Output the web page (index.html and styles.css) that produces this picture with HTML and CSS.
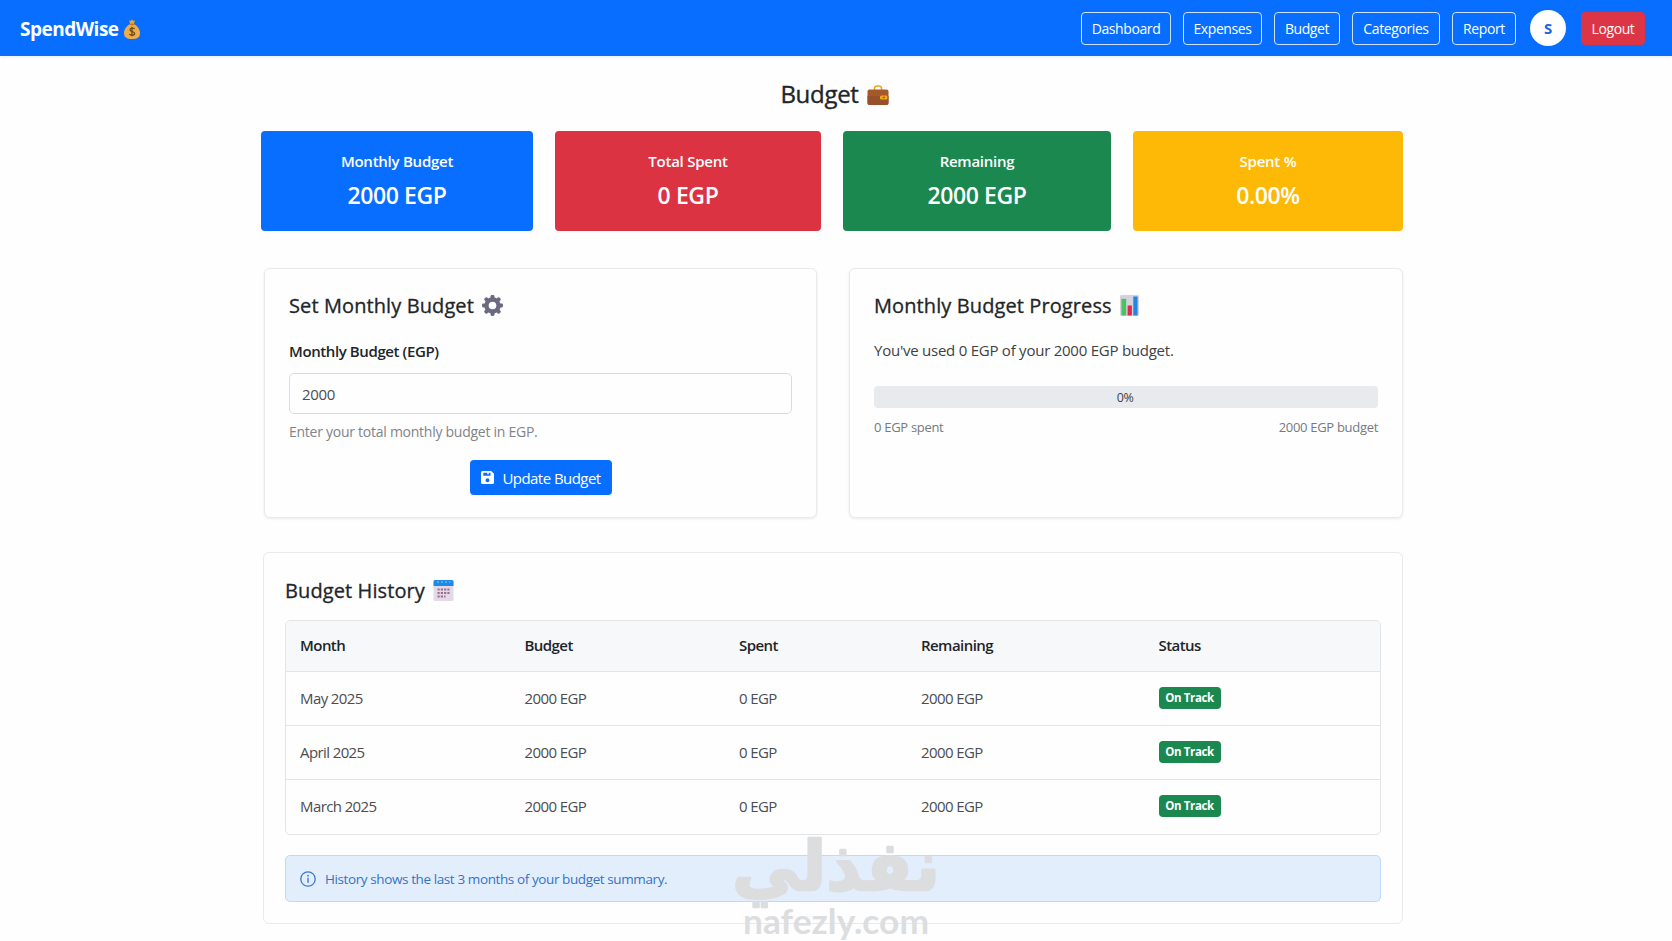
FILE: index.html
```html
<!DOCTYPE html>
<html lang="en">
<head>
    <meta charset="UTF-8">
    <meta name="viewport" content="width=device-width, initial-scale=1.0">
    <title>SpendWise - Budget</title>
    <link rel="stylesheet" href="styles.css">
</head>
<body>
    <nav class="navbar">
        <a class="brand" href="#">
            <span>SpendWise</span>
            <svg class="brand-icon" viewBox="0 0 16 20">
                <path d="M5 1.2l1.6.8L8 .6l1.4 1.4 1.6-.8-1.2 4H6.200z" fill="#e9a33b"/>
                <path d="M6 5h4c3.500 2 6 5.500 6 9 0 4-2.500 6-8 6s-8-2-8-6c0-3.500 2.500-7 6-9z" fill="#f0ac48"/>
                <path d="M5.500 4.700h5v1.400h-5z" fill="#b9772a"/>
                <path d="M10.600 9.800C9.800 8.700 6 8.600 6 10.800c0 2.300 4.600 1.300 4.600 3.600 0 2.300-4.200 2.100-5.200.8M8 7.800v9.400" fill="none" stroke="#6b4a1c" stroke-width="1.300"/>
            </svg>
        </a>
        <div class="nav-links">
            <a class="nav-btn nav-dashboard" href="#">Dashboard</a>
            <a class="nav-btn nav-expenses" href="#">Expenses</a>
            <a class="nav-btn nav-budget" href="#">Budget</a>
            <a class="nav-btn nav-categories" href="#">Categories</a>
            <a class="nav-btn nav-report" href="#">Report</a>
            <div class="avatar">S</div>
            <a class="nav-btn logout" href="#">Logout</a>
        </div>
    </nav>

    <main class="container">
        <h1>
            <span>Budget</span>
            <svg class="title-icon" viewBox="0 0 22 20">
                <path d="M7.500 5V3.200C7.500 2 8.500 1 11 1s3.500 1 3.500 2.200V5" fill="none" stroke="#e8a51e" stroke-width="1.500"/>
                <rect x="0.500" y="4.500" width="21" height="15.500" rx="2" fill="#a5592b"/>
                <path d="M.5 11h21v7a2 2 0 0 1-2 2h-17a2 2 0 0 1-2-2z" fill="#98502a"/>
                <rect x="13" y="10.500" width="7.500" height="4" rx="1.500" fill="#f0ae1f"/>
                <rect x="15.500" y="11.700" width="2.500" height="1.500" fill="#a5592b"/>
            </svg>
        </h1>

        <!-- Summary -->
        <section class="stats">
            <div class="stat blue">
                <div class="stat-label">Monthly Budget</div>
                <div class="stat-value">2000 EGP</div>
            </div>
            <div class="stat red">
                <div class="stat-label">Total Spent</div>
                <div class="stat-value">0 EGP</div>
            </div>
            <div class="stat green">
                <div class="stat-label">Remaining</div>
                <div class="stat-value">2000 EGP</div>
            </div>
            <div class="stat yellow">
                <div class="stat-label">Spent %</div>
                <div class="stat-value">0.00%</div>
            </div>
        </section>

        <section class="panels">
            <!-- Set budget -->
            <form class="card">
                <h2>
                    <span>Set Monthly Budget</span>
                    <svg class="h-icon gear" viewBox="0 0 22 22">
                        <g fill="#6b6a80">
                            <rect x="9" y="0" width="4" height="22" rx="1.200"/>
                            <rect x="9" y="0" width="4" height="22" rx="1.200" transform="rotate(45 11 11)"/>
                            <rect x="9" y="0" width="4" height="22" rx="1.200" transform="rotate(90 11 11)"/>
                            <rect x="9" y="0" width="4" height="22" rx="1.200" transform="rotate(135 11 11)"/>
                            <circle cx="11" cy="11" r="8.600"/>
                        </g>
                        <circle cx="11" cy="11" r="4" fill="#fff"/>
                    </svg>
                </h2>
                <label for="budget">Monthly Budget (EGP)</label>
                <input type="text" id="budget" value="2000">
                <p class="help">Enter your total monthly budget in EGP.</p>
                <button type="button" class="update-btn">
                    <svg viewBox="0 0 13 13">
                        <path fill-rule="evenodd" d="M1.500 0h8.700L13 2.800v8.700a1.500 1.500 0 0 1-1.500 1.500h-10A1.500 1.500 0 0 1 0 11.500v-10A1.500 1.500 0 0 1 1.500 0zM2.300 1.800v3h7.200v-3H7.800v1.400H6.300V1.800zM6.500 7.200a2 2 0 1 0 0 4 2 2 0 0 0 0-4z" fill="#fff"/>
                    </svg>
                    <span>Update Budget</span>
                </button>
            </form>

            <!-- Progress -->
            <div class="card">
                <h2>
                    <span>Monthly Budget Progress</span>
                    <svg class="h-icon chart" viewBox="0 0 20 22">
                        <rect width="20" height="22" rx="1.500" fill="#d3d2dd"/>
                        <rect x="1.500" y="4" width="5" height="17.500" fill="#4ac35c"/>
                        <rect x="8" y="11" width="4.500" height="10.500" fill="#e0294d"/>
                        <rect x="14" y="1.500" width="4.500" height="20" fill="#2287e0"/>
                    </svg>
                </h2>
                <p class="used">You've used 0 EGP of your 2000 EGP budget.</p>
                <div class="progress">0%</div>
                <div class="progress-labels">
                    <span>0 EGP spent</span>
                    <span>2000 EGP budget</span>
                </div>
            </div>
        </section>

        <!-- History -->
        <section class="card history">
            <h2>
                <span>Budget History</span>
                <svg class="h-icon calendar" viewBox="0 0 21 21">
                    <rect x="0.500" y="1" width="20" height="20" rx="1.500" fill="#e3d9e8"/>
                    <path d="M2 0h17a1.500 1.500 0 0 1 1.500 1.500V6H.5V1.500A1.500 1.500 0 0 1 2 0z" fill="#1c8ae6"/>
                    <path d="M4 2h2M8 2h2M12 2h2M16 2h1.500" stroke="#8cc6f5"/>
                    <path d="M4.500 9.500h12M4.500 13h12M4.500 16.500h8" stroke="#96708f" stroke-width="2" stroke-dasharray="2.200 1.100"/>
                </svg>
            </h2>
            <table>
                <colgroup>
                    <col class="col-month">
                    <col class="col-budget">
                    <col class="col-spent">
                    <col class="col-remaining">
                    <col>
                </colgroup>
                <thead>
                    <tr><th>Month</th><th>Budget</th><th>Spent</th><th>Remaining</th><th>Status</th></tr>
                </thead>
                <tbody>
                    <tr><td>May 2025</td><td>2000 EGP</td><td>0 EGP</td><td>2000 EGP</td><td><span class="badge">On Track</span></td></tr>
                    <tr><td>April 2025</td><td>2000 EGP</td><td>0 EGP</td><td>2000 EGP</td><td><span class="badge">On Track</span></td></tr>
                    <tr><td>March 2025</td><td>2000 EGP</td><td>0 EGP</td><td>2000 EGP</td><td><span class="badge">On Track</span></td></tr>
                </tbody>
            </table>
            <div class="alert">
                <svg viewBox="0 0 16 16">
                    <circle cx="8" cy="8" r="7.200" fill="none" stroke="#3b78cc" stroke-width="1.300"/>
                    <circle cx="8" cy="4.700" r="0.900" fill="#3b78cc"/>
                    <path d="M8 6.800v5" stroke="#3b78cc" stroke-width="1.400"/>
                </svg>
                <span>History shows the last 3 months of your budget summary.</span>
            </div>
        </section>
    </main>

    <svg class="watermark" viewBox="0 0 230 120">
        <text class="wm-ar" x="110" y="69" text-anchor="middle" textLength="208" lengthAdjust="spacingAndGlyphs">نفذلي</text>
        <text class="wm-en" x="17" y="113" textLength="186" lengthAdjust="spacingAndGlyphs">nafezly.com</text>
    </svg>
</body>
</html>
```
FILE: styles.css
```css
* {
    box-sizing: border-box;
}

body {
    margin: 0;
    min-height: 941px;
    overflow: hidden;
    background: #fefefe;
    color: #212529;
    font-family: "Open Sans", "Noto Sans", sans-serif;
    font-size: 15px;
    line-height: 24px;
    letter-spacing: -0.4px;
}

h1, h2, p {
    margin: 0;
}

a {
    color: inherit;
    text-decoration: none;
}

svg {
    display: block;
    flex: none;
}

/* Navbar */
.navbar {
    display: flex;
    justify-content: space-between;
    align-items: center;
    height: 56px;
    padding: 0 27px 0 20px;
    background: #086eff;
    color: #fff;
    box-shadow: 0 2px 2px rgba(0, 60, 80, 0.06);
}

.brand {
    display: flex;
    align-items: center;
    gap: 6px;
    padding-top: 2px;
    font-size: 19px;
    font-weight: 700;
    letter-spacing: -0.5px;
}

.brand span {
    width: 98px;
}

.brand-icon {
    width: 16px;
    height: 20px;
}

.nav-links {
    display: flex;
    align-items: center;
    gap: 12px;
}

.nav-btn {
    height: 33px;
    border: 1px solid rgba(255, 255, 255, 0.8);
    border-radius: 4px;
    font-size: 14px;
    line-height: 31px;
    text-align: center;
    white-space: nowrap;
}

.nav-dashboard { width: 90px; }
.nav-expenses { width: 79px; }
.nav-budget { width: 66px; }
.nav-categories { width: 88px; }
.nav-report { width: 64px; }

.avatar {
    width: 36px;
    height: 36px;
    margin: 0 3px 0 2px;
    border-radius: 50%;
    background: #fff;
    color: #1a66e0;
    font-weight: 700;
    line-height: 36px;
    text-align: center;
}

.logout {
    width: 64px;
    border-color: #dc3545;
    background: #dc3545;
}

/* Page */
.container {
    width: 1142px;
    margin-left: 261px;
}

h1 {
    display: flex;
    justify-content: center;
    align-items: center;
    gap: 8px;
    height: 75px;
    padding: 0 0 0 5px;
    font-size: 24px;
    font-weight: 500;
    letter-spacing: -0.3px;
    -webkit-text-stroke: 0.35px;
}

.title-icon {
    width: 22px;
    height: 20px;
    margin-top: 2px;
}

.stats {
    display: grid;
    grid-template-columns: 272px 266px 268px 270px;
    gap: 22px;
}

.stat {
    height: 100px;
    padding-top: 18px;
    border-radius: 4px;
    color: #fff;
    text-align: center;
}

.stat-label {
    font-weight: 600;
    letter-spacing: -0.25px;
}

.stat-value {
    margin-top: 5px;
    font-size: 23px;
    font-weight: 600;
    line-height: 34px;
    letter-spacing: -0.4px;
}

.blue { background: #086eff; }
.red { background: #dc3343; }
.green { background: #1b8850; }
.yellow { background: #fdb906; }

/* Cards */
.panels {
    display: grid;
    grid-template-columns: 553px 554px;
    gap: 32px;
    margin: 37px 0 34px 3px;
}

.card {
    height: 250px;
    padding: 23px 24px 0;
    border: 1px solid #e9eaec;
    border-radius: 6px;
    background: #fefefe;
    box-shadow: 0 1px 3px rgba(0, 0, 0, 0.08);
}

h2 {
    display: flex;
    align-items: center;
    gap: 8px;
    height: 27px;
    font-size: 20px;
    font-weight: 500;
    letter-spacing: 0.1px;
    -webkit-text-stroke: 0.3px;
}

.gear {
    width: 21px;
    height: 21px;
}

.chart {
    width: 19px;
    height: 21px;
}

.calendar {
    width: 21px;
    height: 21px;
}

label {
    display: block;
    margin-top: 20px;
    font-weight: 600;
}

input {
    display: block;
    width: 100%;
    height: 41px;
    margin-top: 10px;
    padding: 0 12px;
    border: 1px solid #d9dcdf;
    border-radius: 5px;
    background: #fefefe;
    color: #4a4e52;
    font: inherit;
    letter-spacing: -0.3px;
}

.help {
    margin-top: 6px;
    color: #7f848a;
    font-size: 14px;
    letter-spacing: -0.26px;
}

.update-btn {
    display: flex;
    align-items: center;
    justify-content: center;
    gap: 8px;
    width: 142px;
    height: 35px;
    margin: 16px auto 0;
    padding: 0 0 0 1px;
    border: 0;
    border-radius: 4px;
    background: #086eff;
    color: #fff;
    font: inherit;
    letter-spacing: -0.55px;
}

.update-btn svg {
    width: 13px;
    height: 13px;
}

.used {
    margin-top: 19px;
    color: #3d4145;
    letter-spacing: -0.24px;
}

.progress {
    height: 22px;
    margin-top: 24px;
    padding-right: 2px;
    border-radius: 4px;
    background: #e8ebee;
    color: #3d4145;
    font-size: 12.500px;
    line-height: 23px;
    text-align: center;
}

.progress-labels {
    display: flex;
    justify-content: space-between;
    margin-top: 7px;
    color: #757a80;
    font-size: 13px;
    letter-spacing: -0.3px;
}

/* History */
.history {
    width: 1140px;
    height: 372px;
    margin-left: 2px;
    padding: 24px 21px 0;
    box-shadow: none;
}

table {
    width: 1096px;
    height: 215px;
    margin-top: 16px;
    border: 1px solid #e2e4e6;
    border-radius: 5px;
    border-spacing: 0;
    table-layout: fixed;
    overflow: hidden;
    letter-spacing: -0.6px;
}

.col-month { width: 224.500px; }
.col-budget { width: 214.500px; }
.col-spent { width: 182px; }
.col-remaining { width: 237.500px; }

th, td {
    height: 54px;
    padding: 0 14px 2px;
    border-bottom: 1px solid #e2e4e6;
    text-align: left;
}

th {
    height: 51px;
    background: #f7f8f9;
    font-weight: 600;
    letter-spacing: -0.55px;
}

td {
    color: #4a4d51;
}

tr:last-child td {
    border-bottom: 0;
}

.badge {
    display: block;
    width: 62px;
    height: 22px;
    border-radius: 4px;
    background: #1b8850;
    color: #fff;
    font-size: 11.500px;
    font-weight: 700;
    line-height: 22px;
    letter-spacing: -0.4px;
    text-align: center;
}

.alert {
    display: flex;
    align-items: center;
    gap: 9px;
    width: 1096px;
    height: 47px;
    margin-top: 20px;
    padding-left: 14px;
    border: 1px solid #bfd9f8;
    border-radius: 5px;
    background: #e3eefd;
    color: #3473c4;
    font-size: 13.500px;
}

.alert svg {
    width: 16px;
    height: 16px;
}

/* Watermark over the page */
.watermark {
    position: absolute;
    left: 726px;
    top: 821px;
    width: 230px;
    height: 120px;
    overflow: visible;
    fill: #dcdddf;
    letter-spacing: 0;
    pointer-events: none;
}

.wm-ar {
    font-family: "DejaVu Sans", sans-serif;
    font-size: 69px;
    font-weight: 700;
    stroke: #dcdddf;
    stroke-width: 2.500px;
    stroke-linejoin: round;
}

.wm-en {
    font-family: Lato, sans-serif;
    font-size: 34px;
    font-weight: 700;
}
```
